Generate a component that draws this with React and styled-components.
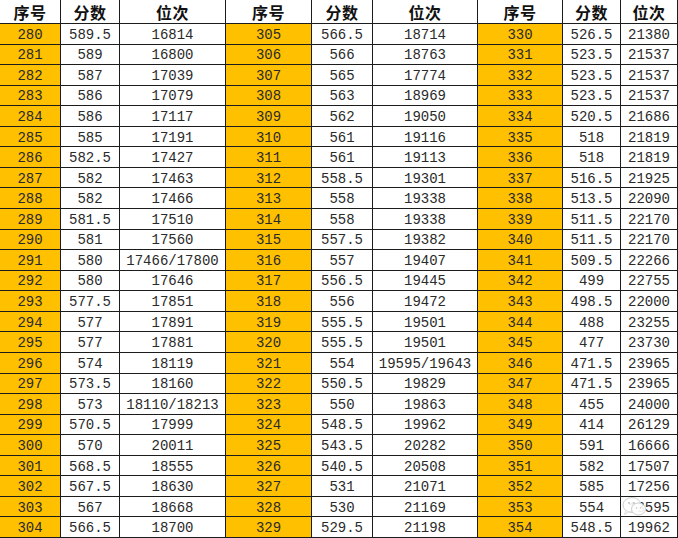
import React from "react";
import styled, { createGlobalStyle } from "styled-components";

const Global = createGlobalStyle`
  html, body { margin: 0; padding: 0; background: #ffffff; }
  #root { width: 678px; height: 538px; overflow: hidden; }
`;

const g1 = [
  ["280", "589.5", "16814"], ["281", "589", "16800"], ["282", "587", "17039"],
  ["283", "586", "17079"], ["284", "586", "17117"], ["285", "585", "17191"],
  ["286", "582.5", "17427"], ["287", "582", "17463"], ["288", "582", "17466"],
  ["289", "581.5", "17510"], ["290", "581", "17560"], ["291", "580", "17466/17800"],
  ["292", "580", "17646"], ["293", "577.5", "17851"], ["294", "577", "17891"],
  ["295", "577", "17881"], ["296", "574", "18119"], ["297", "573.5", "18160"],
  ["298", "573", "18110/18213"], ["299", "570.5", "17999"], ["300", "570", "20011"],
  ["301", "568.5", "18555"], ["302", "567.5", "18630"], ["303", "567", "18668"],
  ["304", "566.5", "18700"],
];
const g2 = [
  ["305", "566.5", "18714"], ["306", "566", "18763"], ["307", "565", "17774"],
  ["308", "563", "18969"], ["309", "562", "19050"], ["310", "561", "19116"],
  ["311", "561", "19113"], ["312", "558.5", "19301"], ["313", "558", "19338"],
  ["314", "558", "19338"], ["315", "557.5", "19382"], ["316", "557", "19407"],
  ["317", "556.5", "19445"], ["318", "556", "19472"], ["319", "555.5", "19501"],
  ["320", "555.5", "19501"], ["321", "554", "19595/19643"], ["322", "550.5", "19829"],
  ["323", "550", "19863"], ["324", "548.5", "19962"], ["325", "543.5", "20282"],
  ["326", "540.5", "20508"], ["327", "531", "21071"], ["328", "530", "21169"],
  ["329", "529.5", "21198"],
];
const g3 = [
  ["330", "526.5", "21380"], ["331", "523.5", "21537"], ["332", "523.5", "21537"],
  ["333", "523.5", "21537"], ["334", "520.5", "21686"], ["335", "518", "21819"],
  ["336", "518", "21819"], ["337", "516.5", "21925"], ["338", "513.5", "22090"],
  ["339", "511.5", "22170"], ["340", "511.5", "22170"], ["341", "509.5", "22266"],
  ["342", "499", "22755"], ["343", "498.5", "22000"], ["344", "488", "23255"],
  ["345", "477", "23730"], ["346", "471.5", "23965"], ["347", "471.5", "23965"],
  ["348", "455", "24000"], ["349", "414", "26129"], ["350", "591", "16666"],
  ["351", "582", "17507"], ["352", "585", "17256"], ["353", "554", "18595"],
  ["354", "548.5", "19962"],
];

const Sheet = styled.div`
  position: relative;
  width: 678px;
  height: 538px;
  display: grid;
  grid-template-columns: 61px 59px 106px 86px 61px 105px 85px 58px 57px;
  grid-template-rows: 24px repeat(25, 1fr);
  background: #ffffff;
`;

const Cell = styled.div`
  box-sizing: border-box;
  display: flex;
  align-items: center;
  justify-content: center;
  border-right: 1px solid #1c1c1c;
  border-bottom: 1px solid #1c1c1c;
  background: ${(p) => (p.$gold ? "#ffc000" : "#ffffff")};
  font-family: "Liberation Mono", "DejaVu Sans Mono", monospace;
  font-size: 14px;
  color: #2a2a2a;
  white-space: nowrap;
  overflow: hidden;
  line-height: 1;
  padding-top: 2px;
`;

const HeadCell = styled(Cell)`
  font-family: "Noto Sans CJK SC", "Noto Sans", sans-serif;
  font-weight: 700;
  font-size: 16px;
  color: #111111;
  letter-spacing: 0.5px;
  padding-top: 0;
`;

const Watermark = styled.svg`
  position: absolute;
  left: 620px;
  top: 495px;
  width: 28px;
  height: 24px;
  pointer-events: none;
`;

const heads = ["序号", "分数", "位次"];

export default function App() {
  const rows = [];
  for (let i = 0; i < 25; i++) {
    [g1, g2, g3].forEach((g, gi) => {
      rows.push(<Cell key={`${i}-${gi}-a`} $gold>{g[i][0]}</Cell>);
      rows.push(<Cell key={`${i}-${gi}-b`}>{g[i][1]}</Cell>);
      rows.push(<Cell key={`${i}-${gi}-c`}>{g[i][2]}</Cell>);
    });
  }
  return (
    <>
      <Global />
      <Sheet>
        {[0, 1, 2].map((gi) =>
          heads.map((h) => <HeadCell key={`h${gi}${h}`}>{h}</HeadCell>)
        )}
        {rows}
        <Watermark viewBox="0 0 28 24">
          <ellipse cx="12" cy="10" rx="9" ry="7.5" fill="rgba(255,255,255,0.9)" stroke="#cfcfcf" strokeWidth="1" />
          <ellipse cx="18.5" cy="14" rx="7" ry="6" fill="rgba(255,255,255,0.9)" stroke="#cfcfcf" strokeWidth="1" />
          <circle cx="9" cy="8" r="1" fill="#c2c2c2" />
          <circle cx="14" cy="8" r="1" fill="#c2c2c2" />
          <circle cx="16.5" cy="13" r="0.8" fill="#c2c2c2" />
          <circle cx="20.5" cy="13" r="0.8" fill="#c2c2c2" />
          <path d="M6 16 L4.5 19.5 L8.5 17" fill="rgba(255,255,255,0.9)" stroke="#cfcfcf" strokeWidth="0.8" />
        </Watermark>
      </Sheet>
    </>
  );
}
